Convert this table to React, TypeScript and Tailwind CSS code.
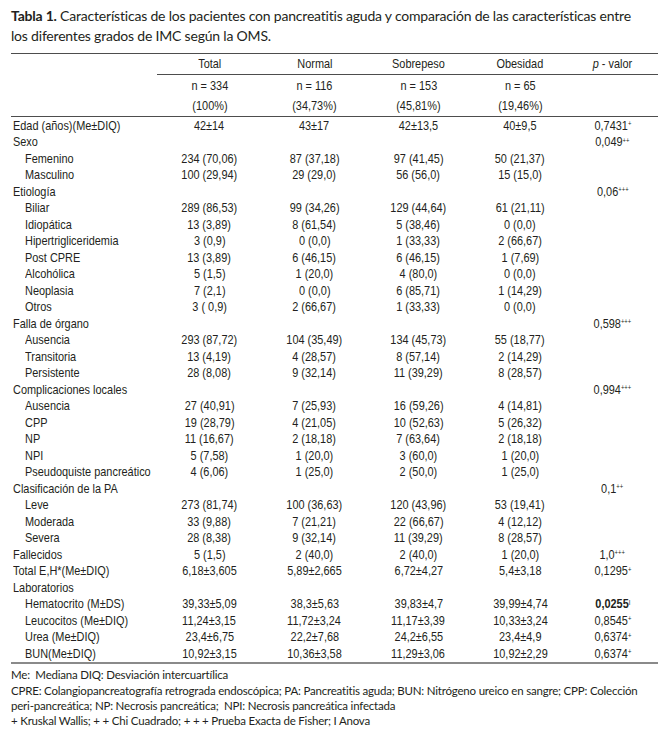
import React from 'react';

type Row = {
  label: string;
  sub?: boolean;
  v?: string[];
  p?: string;
  sup?: string;
  bold?: boolean;
};

const rows: Row[] = [
  { label: 'Edad (años)(Me±DIQ)', v: ['42±14', '43±17', '42±13,5', '40±9,5'], p: '0,7431', sup: '+' },
  { label: 'Sexo', p: '0,049', sup: '++' },
  { label: 'Femenino', sub: true, v: ['234 (70,06)', '87 (37,18)', '97 (41,45)', '50 (21,37)'] },
  { label: 'Masculino', sub: true, v: ['100 (29,94)', '29 (29,0)', '56 (56,0)', '15 (15,0)'] },
  { label: 'Etiología', p: '0,06', sup: '+++' },
  { label: 'Biliar', sub: true, v: ['289 (86,53)', '99 (34,26)', '129 (44,64)', '61 (21,11)'] },
  { label: 'Idiopática', sub: true, v: ['13 (3,89)', '8 (61,54)', '5 (38,46)', '0 (0,0)'] },
  { label: 'Hipertrigliceridemia', sub: true, v: ['3 (0,9)', '0 (0,0)', '1 (33,33)', '2 (66,67)'] },
  { label: 'Post CPRE', sub: true, v: ['13 (3,89)', '6 (46,15)', '6 (46,15)', '1 (7,69)'] },
  { label: 'Alcohólica', sub: true, v: ['5 (1,5)', '1 (20,0)', '4 (80,0)', '0 (0,0)'] },
  { label: 'Neoplasia', sub: true, v: ['7 (2,1)', '0 (0,0)', '6 (85,71)', '1 (14,29)'] },
  { label: 'Otros', sub: true, v: ['3 ( 0,9)', '2 (66,67)', '1 (33,33)', '0 (0,0)'] },
  { label: 'Falla de órgano', p: '0,598', sup: '+++' },
  { label: 'Ausencia', sub: true, v: ['293 (87,72)', '104 (35,49)', '134 (45,73)', '55 (18,77)'] },
  { label: 'Transitoria', sub: true, v: ['13 (4,19)', '4 (28,57)', '8 (57,14)', '2 (14,29)'] },
  { label: 'Persistente', sub: true, v: ['28 (8,08)', '9 (32,14)', '11 (39,29)', '8 (28,57)'] },
  { label: 'Complicaciones locales', p: '0,994', sup: '+++' },
  { label: 'Ausencia', sub: true, v: ['27 (40,91)', '7 (25,93)', '16 (59,26)', '4 (14,81)'] },
  { label: 'CPP', sub: true, v: ['19 (28,79)', '4 (21,05)', '10 (52,63)', '5 (26,32)'] },
  { label: 'NP', sub: true, v: ['11 (16,67)', '2 (18,18)', '7 (63,64)', '2 (18,18)'] },
  { label: 'NPI', sub: true, v: ['5 (7,58)', '1 (20,0)', '3 (60,0)', '1 (20,0)'] },
  { label: 'Pseudoquiste pancreático', sub: true, v: ['4 (6,06)', '1 (25,0)', '2 (50,0)', '1 (25,0)'] },
  { label: 'Clasificación de la PA', p: '0,1', sup: '++' },
  { label: 'Leve', sub: true, v: ['273 (81,74)', '100 (36,63)', '120 (43,96)', '53 (19,41)'] },
  { label: 'Moderada', sub: true, v: ['33 (9,88)', '7 (21,21)', '22 (66,67)', '4 (12,12)'] },
  { label: 'Severa', sub: true, v: ['28 (8,38)', '9 (32,14)', '11 (39,29)', '8 (28,57)'] },
  { label: 'Fallecidos', v: ['5 (1,5)', '2 (40,0)', '2 (40,0)', '1 (20,0)'], p: '1,0', sup: '+++' },
  { label: 'Total E,H*(Me±DIQ)', v: ['6,18±3,605', '5,89±2,665', '6,72±4,27', '5,4±3,18'], p: '0,1295', sup: '+' },
  { label: 'Laboratorios' },
  { label: 'Hematocrito (M±DS)', sub: true, v: ['39,33±5,09', '38,3±5,63', '39,83±4,7', '39,99±4,74'], p: '0,0255', sup: 'I', bold: true },
  { label: 'Leucocitos (Me±DIQ)', sub: true, v: ['11,24±3,15', '11,72±3,24', '11,17±3,39', '10,33±3,24'], p: '0,8545', sup: '+' },
  { label: 'Urea (Me±DIQ)', sub: true, v: ['23,4±6,75', '22,2±7,68', '24,2±6,55', '23,4±4,9'], p: '0,6374', sup: '+' },
  { label: 'BUN(Me±DIQ)', sub: true, v: ['10,92±3,15', '10,36±3,58', '11,29±3,06', '10,92±2,29'], p: '0,6374', sup: '+' },
];

const cols = 'grid grid-cols-[146px_105px_105px_103px_100px_85px]';

// narrow look (the source uses Arial Narrow)
const Narrow = ({ children, left }: { children: React.ReactNode; left?: boolean }) => (
  <span className={`inline-block whitespace-pre scale-x-[0.84] ${left ? 'origin-left' : 'origin-center'}`}>
    {children}
  </span>
);

const Cell = ({ children }: { children?: React.ReactNode }) => (
  <div className="text-center">{children ? <Narrow>{children}</Narrow> : null}</div>
);

export default function App() {
  return (
    <div className="w-[669px] h-[731px] bg-white overflow-hidden text-[#231f20] px-[11px] pt-[6px]">
      {/* Title */}
      <p className="font-['Lato',sans-serif] text-[14px] leading-[20px] tracking-[-0.2px] whitespace-nowrap">
        <span className="font-bold">Tabla 1.</span> Características de los pacientes con pancreatitis aguda y comparación de las características entre
        <br />
        los diferentes grados de IMC según la OMS.
      </p>

      <div className="mt-[7px] font-['Liberation_Sans',sans-serif] text-[13px]">
        <div className="border-t-[1.5px] border-[#4d4d4d]" />

        {/* Header */}
        <div className={`${cols} h-[20px] items-center`}>
          <div />
          <Cell>Total</Cell>
          <Cell>Normal</Cell>
          <Cell>Sobrepeso</Cell>
          <Cell>Obesidad</Cell>
          <Cell><span className="italic">p</span> - valor</Cell>
        </div>
        <div className="ml-[146px] border-t-[1.5px] border-[#4d4d4d]" />
        <div className={`${cols} h-[20.5px] items-center`}>
          <div />
          <Cell>n = 334</Cell>
          <Cell>n = 116</Cell>
          <Cell>n = 153</Cell>
          <Cell>n = 65</Cell>
          <div />
        </div>
        <div className={`${cols} h-[20.5px] items-center`}>
          <div />
          <Cell>(100%)</Cell>
          <Cell>(34,73%)</Cell>
          <Cell>(45,81%)</Cell>
          <Cell>(19,46%)</Cell>
          <div />
        </div>
        <div className="border-t-[1.5px] border-[#4d4d4d]" />

        {/* Body */}
        {rows.map((r, i) => (
          <div key={i} className={`${cols} h-[16.5px] items-center leading-none`}>
            <div className={`whitespace-nowrap ${r.sub ? 'pl-[14px]' : 'pl-[2px]'}`}>
              <Narrow left>{r.label}</Narrow>
            </div>
            {(r.v ?? ['', '', '', '']).map((c, j) => (
              <Cell key={j}>{c}</Cell>
            ))}
            <div className={`text-center ${r.bold ? 'font-bold' : ''}`}>
              {r.p && (
                <Narrow>
                  {r.p}
                  {r.sup && <sup className="text-[7px] font-normal">{r.sup}</sup>}
                </Narrow>
              )}
            </div>
          </div>
        ))}
        <div className="border-t-2 border-[#8a8a8a]" />
      </div>

      {/* Notes */}
      <div className="mt-[3px] font-['Lato',sans-serif] text-[11.5px] leading-[15px] tracking-[-0.2px] whitespace-nowrap">
        <p>Me:&nbsp; Mediana DIQ: Desviación intercuartílica</p>
        <p className="mt-[1px]">
          CPRE: Colangiopancreatografía retrograda endoscópica; PA: Pancreatitis aguda; BUN: Nitrógeno ureico en sangre; CPP: Colección
          <br />
          peri-pancreática; NP: Necrosis pancreática;&nbsp; NPI: Necrosis pancreática infectada
        </p>
        <p>+ Kruskal Wallis; + + Chi Cuadrado; + + + Prueba Exacta de Fisher; I Anova</p>
      </div>
    </div>
  );
}
